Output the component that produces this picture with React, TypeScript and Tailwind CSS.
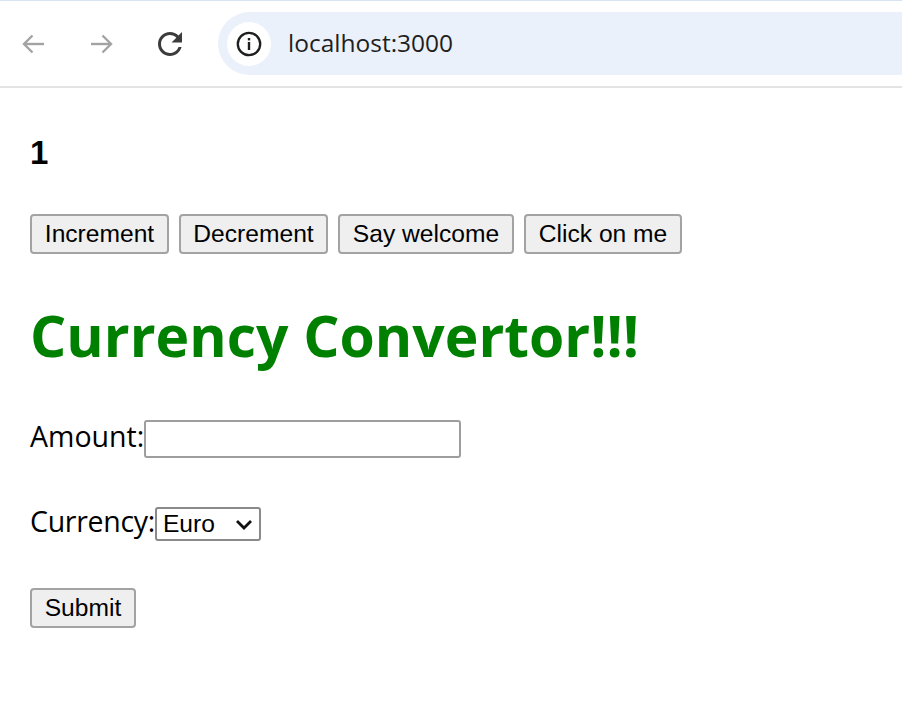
import React from "react";

const sans = { fontFamily: '"Liberation Sans", Arial, sans-serif' };

function BackArrow({ color }: { color: string }) {
  return (
    <svg width="24" height="20" viewBox="0 0 24 20" fill="none">
      <path d="M22 10H2.5" stroke={color} strokeWidth="2.4" strokeLinecap="butt" />
      <path d="M10.5 1.5L2 10l8.5 8.5" stroke={color} strokeWidth="2.4" strokeLinecap="butt" strokeLinejoin="miter" />
    </svg>
  );
}

function ForwardArrow({ color }: { color: string }) {
  return (
    <svg width="24" height="20" viewBox="0 0 24 20" fill="none">
      <path d="M2 10h19.5" stroke={color} strokeWidth="2.4" />
      <path d="M13.5 1.5L22 10l-8.5 8.5" stroke={color} strokeWidth="2.4" strokeLinejoin="miter" />
    </svg>
  );
}

function Reload() {
  return (
    <svg width="36" height="36" viewBox="0 0 24 24">
      <path
        fill="#3c3c3c"
        d="M17.65 6.35C16.2 4.9 14.21 4 12 4c-4.42 0-7.99 3.58-7.99 8s3.57 8 7.99 8c3.73 0 6.84-2.55 7.730-6h-2.08c-.82 2.33-3.04 4-5.65 4-3.31 0-6-2.69-6-6s2.69-6 6-6c1.66 0 3.14.69 4.22 1.78L13 11h7V4l-2.35 2.35z"
      />
    </svg>
  );
}

function InfoIcon() {
  return (
    <svg width="26" height="26" viewBox="0 0 26 26" fill="none">
      <circle cx="13" cy="13" r="11.2" stroke="#1f1f1f" strokeWidth="2.3" />
      <rect x="11.8" y="11" width="2.4" height="8" fill="#1f1f1f" />
      <rect x="11.8" y="7" width="2.4" height="2.4" fill="#1f1f1f" />
    </svg>
  );
}

function Btn({ label, w }: { label: string; w: string }) {
  return (
    <button
      className={`${w} h-[40px] rounded-[4px] border-2 border-[#a3a3a3] bg-[#efefef] text-[24.6px] leading-none text-black flex items-center justify-center`}
      style={sans}
    >
      {label}
    </button>
  );
}

export default function App() {
  const segoe = { fontFamily: '"Open Sans", "Noto Sans", sans-serif' };
  return (
    <div className="min-h-screen w-full bg-white">
      {/* Browser chrome */}
      <div className="h-[88px] border-t border-[#d7e2f5] border-b-2 border-b-[#e3e3e3] bg-white flex items-center">
        <div className="ml-[22px] w-[24px] h-[24px] flex items-center justify-center">
          <BackArrow color="#a3a3a3" />
        </div>
        <div className="ml-[43px] w-[24px] h-[24px] flex items-center justify-center">
          <ForwardArrow color="#a3a3a3" />
        </div>
        <div className="ml-[39px] w-[36px] h-[36px] flex items-center justify-center">
          <Reload />
        </div>
        <div className="ml-[30px] flex-1 h-[63px] rounded-l-[32px] bg-[#ebf1fa] flex items-center pl-[9px]">
          <div className="w-[44px] h-[44px] rounded-full bg-white flex items-center justify-center">
            <InfoIcon />
          </div>
          <span className="ml-[17px] text-[24.5px] text-[#1f1f1f] leading-none" style={segoe}>
            localhost:3000
          </span>
        </div>
      </div>

      {/* Page content */}
      <div className="pl-[30px] flex flex-col items-start">
        <div className="mt-[45px] h-[40px] text-[33px] leading-[40px] font-bold text-black" style={sans}>
          1
        </div>

        <div className="mt-[41px] flex gap-[10px]">
          <Btn label="Increment" w="w-[139px]" />
          <Btn label="Decrement" w="w-[149px]" />
          <Btn label="Say welcome" w="w-[176px]" />
          <Btn label="Click on me" w="w-[158px]" />
        </div>

        <h1 className="mt-[53px] text-[57px] leading-[57px] font-bold text-[#008000]" style={segoe}>
          Currency Convertor!!!
        </h1>

        <div className="mt-[56px] flex items-start">
          <span className="text-[28.5px] leading-[32px] text-black" style={segoe}>
            Amount:
          </span>
          <input
            type="text"
            className="w-[317px] h-[38px] border-2 border-[#9e9e9e] rounded-[3px] bg-white outline-none"
          />
        </div>

        <div className="mt-[49px] flex items-start">
          <span className="text-[28.5px] leading-[28px] tracking-[-0.3px] text-black" style={segoe}>
            Currency:
          </span>
          <div className="relative w-[106px] h-[34px]">
            <select
              className="appearance-none w-full h-full border-2 border-[#8a8a8a] rounded-[3px] bg-white pl-[6px] text-[24.6px] leading-none text-black outline-none"
              style={sans}
              defaultValue="Euro"
            >
              <option>Euro</option>
              <option>Dollar</option>
              <option>Rupee</option>
            </select>
            <svg
              className="absolute right-[8px] top-[12px] pointer-events-none"
              width="18"
              height="11"
              viewBox="0 0 18 11"
              fill="none"
            >
              <path d="M2 2l7 7 7-7" stroke="#111" strokeWidth="2.8" />
            </svg>
          </div>
        </div>

        <div className="mt-[47px]">
          <Btn label="Submit" w="w-[106px]" />
        </div>
      </div>
    </div>
  );
}
